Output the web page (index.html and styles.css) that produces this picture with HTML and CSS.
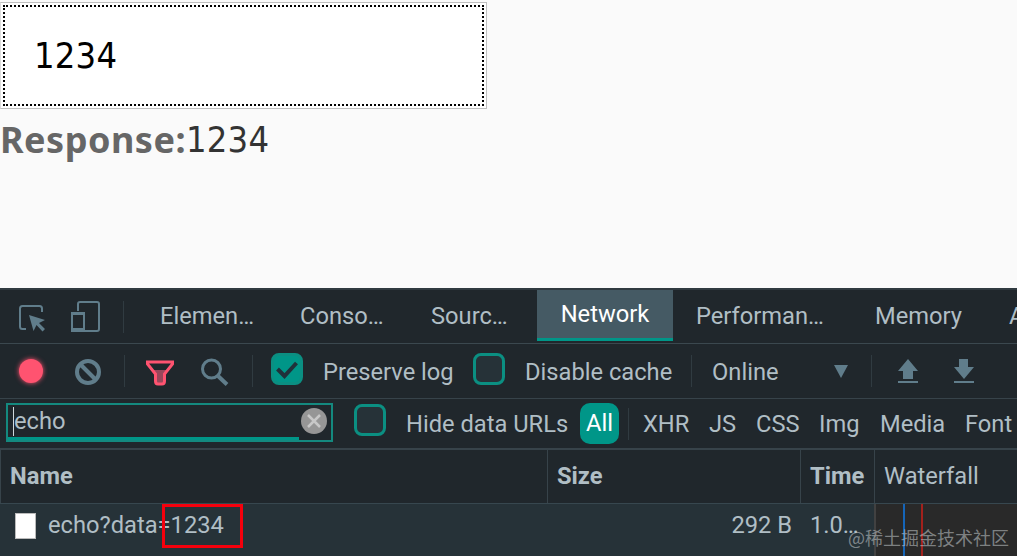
FILE: index.html
```html
<!DOCTYPE html>
<html lang="en">
<head>
    <meta charset="UTF-8">
    <meta name="viewport" content="width=device-width, initial-scale=1.0">
    <title>Echo</title>
    <link rel="stylesheet" href="styles.css">
</head>
<body>
    <div class="page">
        <div class="input-box"><div class="input-focus">1234</div></div>
        <div class="response"><b>Response:</b><span>1234</span></div>
    </div>

    <div class="devtools">
        <div class="tabs">
            <svg class="icon inspect" width="28" height="28" viewBox="0 0 28 28">
                <path d="M8 25H4.500Q2 25 2 22.500V4.500Q2 2 4.500 2H21.500Q24 2 24 4.500V8" fill="none" stroke="#607d8b" stroke-width="2"/>
                <path d="M11 11l16 5-6 3 6 6-2.500 2.500-6-6.500-3 6z" fill="#607d8b"/>
            </svg>
            <svg class="icon device" width="32" height="34" viewBox="0 0 32 34">
                <path d="M8 11V4Q8 2 10 2H27Q29 2 29 4V29Q29 31 27 31H14" fill="none" stroke="#607d8b" stroke-width="2"/>
                <rect x="2" y="13" width="12" height="18" rx="1" fill="none" stroke="#607d8b" stroke-width="2"/>
                <path d="M1 12h14v3H1zM1 28h14v4H1z" fill="#607d8b"/>
            </svg>
            <i class="divider"></i>
            <span class="tab elements">Elemen…</span>
            <span class="tab console">Conso…</span>
            <span class="tab sources">Sourc…</span>
            <span class="tab active">Network</span>
            <span class="tab performance">Performan…</span>
            <span class="tab memory">Memory</span>
            <span class="tab application">A</span>
        </div>

        <div class="toolbar">
            <i class="record"></i>
            <svg class="icon clear" width="28" height="28" viewBox="0 0 28 28" fill="none" stroke="#607d8b" stroke-width="4">
                <circle cx="14" cy="14" r="11"/>
                <path d="M6 6l16 16"/>
            </svg>
            <i class="divider"></i>
            <svg class="icon filter" width="30" height="26" viewBox="0 0 30 26">
                <path d="M8 10h14l-3 5v9h-8v-9z" fill="#99475b"/>
                <path d="M2.500 2H27.500V4L19.500 14V21Q19.500 24 17 24H13Q10.500 24 10.500 21V14L2.500 4Z" fill="none" stroke="#ff5370" stroke-width="3"/>
            </svg>
            <svg class="icon search" width="30" height="30" viewBox="0 0 30 30" fill="none" stroke="#607d8b">
                <circle cx="11.500" cy="11" r="9" stroke-width="3"/>
                <path d="M17.500 17.500l9.500 9" stroke-width="4"/>
            </svg>
            <i class="divider"></i>
            <i class="checkbox checked">
                <svg width="24" height="20" viewBox="0 0 24 20"><path d="M2.500 9l7 7L21.500 3" fill="none" stroke="#20313a" stroke-width="4"/></svg>
            </i>
            <span class="preserve">Preserve log</span>
            <i class="checkbox"></i>
            <span class="disable">Disable cache</span>
            <i class="divider"></i>
            <span class="online">Online</span>
            <svg class="arrow" width="14" height="13" viewBox="0 0 14 13"><path d="M0 0h14L7 13z" fill="#607d8b"/></svg>
            <i class="divider"></i>
            <svg class="icon import" width="20" height="24" viewBox="0 0 20 24" fill="#607d8b">
                <path d="M10 0l10 12h-5v8H5v-8H0zM0 22h20v2H0z"/>
            </svg>
            <svg class="icon export" width="20" height="24" viewBox="0 0 20 24" fill="#607d8b">
                <path d="M5 0h9v8h6l-10 12L0 8h5zM0 22h20v2H0z"/>
            </svg>
        </div>

        <div class="filters">
            <div class="search-field">
                <i class="caret"></i><span>echo</span>
                <svg class="cancel" width="26" height="26" viewBox="0 0 26 26">
                    <circle cx="13" cy="13" r="13" fill="#969696"/>
                    <path d="M7 7l12 12M19 7L7 19" stroke="#c8c8c8" stroke-width="2.500"/>
                </svg>
            </div>
            <i class="checkbox"></i>
            <span class="hide-urls">Hide data URLs</span>
            <span class="all">All</span>
            <i class="divider"></i>
            <span class="type xhr">XHR</span>
            <span class="type js">JS</span>
            <span class="type css">CSS</span>
            <span class="type img">Img</span>
            <span class="type media">Media</span>
            <span class="type">Font</span>
        </div>

        <div class="table head">
            <b>Name</b>
            <b>Size</b>
            <b>Time</b>
            <span>Waterfall</span>
        </div>
        <div class="table row">
            <div class="name"><i class="file"></i><span>echo?data=1234</span><i class="highlight"></i></div>
            <div class="size">292 B</div>
            <div>1.0…</div>
            <div class="waterfall"><i class="blue"></i><i class="red"></i></div>
        </div>
    </div>
    <div class="watermark">@稀土掘金技术社区</div>
</body>
</html>
```

FILE: styles.css
```css
* {
    box-sizing: border-box;
}

body {
    margin: 0;
    width: 1017px;
    height: 556px;
    overflow: hidden;
    position: relative;
    background: #fafafa;
    font-family: Roboto, sans-serif;
    font-size: 23.7px;
    color: #b0bec5;
}

svg, i {
    display: block;
    flex: none;
}

.page {
    height: 288px;
    padding-top: 2px;
    font-family: "DejaVu Sans Condensed", "DejaVu Sans", sans-serif;
    font-stretch: condensed;
    font-size: 36px;
}

.input-box {
    width: 487px;
    height: 107px;
    padding: 2px;
    background: #fff;
    border: 1px solid #c0c0c0;
    border-left-color: #ddd;
}

.input-focus {
    height: 101px;
    padding-left: 29px;
    border: 2px dotted #000;
    line-height: 97px;
    letter-spacing: 0.2px;
    color: #000;
}

.response {
    display: flex;
    height: 62px;
    line-height: 62px;
    letter-spacing: 0.2px;
    color: #333;
}

.response b {
    width: 186px;
    font-family: "Noto Sans", sans-serif;
    font-stretch: normal;
    letter-spacing: 0.5px;
    color: #666;
    white-space: nowrap;
}

.devtools {
    height: 268px;
    background: #20272c;
    border-top: 2px solid #303a40;
    white-space: nowrap;
}

.divider {
    width: 1px;
    height: 32px;
    background: #303b41;
}

.tabs, .toolbar, .filters {
    display: flex;
    align-items: center;
}

.tabs {
    height: 54px;
    border-bottom: 1px solid #3b484f;
}

.inspect {
    margin: 2px 0 0 18px;
}

.device {
    margin: 0 21px 0 24px;
}

.tab {
    flex: none;
    margin-top: -1px;
}

.elements {
    width: 140px;
    margin-left: 36px;
}

.console {
    width: 131px;
}

.sources {
    width: 106px;
}

.active {
    width: 136px;
    height: 51px;
    margin: 0 23px 2px 0;
    line-height: 48px;
    text-align: center;
    color: #fff;
    background: #455a64;
    border-bottom: 3px solid #009688;
}

.performance {
    width: 179px;
}

.memory {
    width: 134px;
}

.application {
    width: 8px;
    overflow: hidden;
}

.toolbar {
    height: 55px;
    border-bottom: 1px solid #37434a;
}

.record {
    width: 24px;
    height: 24px;
    margin-left: 19px;
    border-radius: 50%;
    background: #ff5370;
    box-shadow: 0 0 5px #ff5370;
}

.clear {
    margin: 1px 22px 0 31px;
}

.filter {
    margin: 3px 25px 0 20px;
}

.search {
    margin: 3px 22px 0 0;
}

.checkbox {
    width: 32px;
    height: 32px;
    border: 3px solid #0b8f82;
    border-radius: 8px;
    background: #263238;
}

.checked {
    background: #009688;
}

.checked svg {
    margin: 4px 0 0 1px;
}

.toolbar .checkbox {
    margin: -5px 0 0 18px;
}

.toolbar span {
    margin-top: 1px;
}

.toolbar .preserve {
    width: 132px;
    margin-left: 20px;
}

.toolbar .disable {
    width: 166px;
    margin-left: 20px;
}

.toolbar .online {
    width: 122px;
    margin-left: 20px;
}

.arrow {
    margin-right: 23px;
}

.import {
    margin-left: 26px;
}

.export {
    margin-left: 36px;
}

.filters {
    height: 51px;
    border-bottom: 2px solid #37434a;
}

.search-field {
    display: flex;
    align-items: center;
    width: 327px;
    height: 39px;
    margin: -2px 21px 0 6px;
    padding: 0 4px 3px 5px;
    border: 2px solid #14897f;
    background: linear-gradient(#009688, #009688) 0 100% / 291px 3px no-repeat;
}

.caret {
    width: 1px;
    height: 29px;
    background: #cfd8dc;
}

.cancel {
    margin-left: auto;
}

.filters .checkbox {
    margin-top: -8px;
}

.hide-urls {
    width: 174px;
    margin-left: 20px;
}

.all {
    width: 39px;
    height: 41px;
    line-height: 41px;
    text-align: center;
    border-radius: 10px;
    background: #009688;
    color: #fff;
}

.filters .divider {
    margin: 0 14px 0 9px;
}

.type {
    flex: none;
}

.xhr {
    width: 66px;
}

.js {
    width: 47px;
}

.css {
    width: 63px;
}

.img {
    width: 61px;
}

.media {
    width: 85px;
}

.table {
    display: grid;
    grid-template-columns: 547px 253px 74px 143px;
}

.head {
    height: 54px;
    line-height: 52px;
    border-bottom: 1px solid #37474f;
}

.head > * {
    padding-left: 9px;
    border-left: 1px solid #37434a;
}

.row {
    height: 53px;
    line-height: 43px;
    background: #263238;
    border-bottom: 1px solid #1b2429;
}

.row > div {
    padding-left: 10px;
}

.row .name {
    display: flex;
    position: relative;
    padding-left: 15px;
}

.file {
    width: 21px;
    height: 26px;
    margin: 9px 12px 0 0;
    background: #fff;
    border: 1px solid #bbb;
}

.highlight {
    position: absolute;
    left: 162px;
    top: 0;
    width: 81px;
    height: 44px;
    border: 3px solid #f5000c;
}

.row .size {
    padding-right: 8px;
    text-align: right;
}

.row .waterfall {
    display: flex;
    padding-left: 27px;
    background: #292929;
    border-left: 2px solid #414141;
}

.blue, .red {
    width: 2px;
    margin-right: 16px;
    background: #1565b8;
}

.red {
    background: #a3211c;
}

/* Sits over the bottom right corner */
.watermark {
    position: absolute;
    right: 8px;
    bottom: 6px;
    font: 18px/26px "Noto Sans CJK SC", sans-serif;
    color: rgba(200, 205, 208, 0.55);
}
```
